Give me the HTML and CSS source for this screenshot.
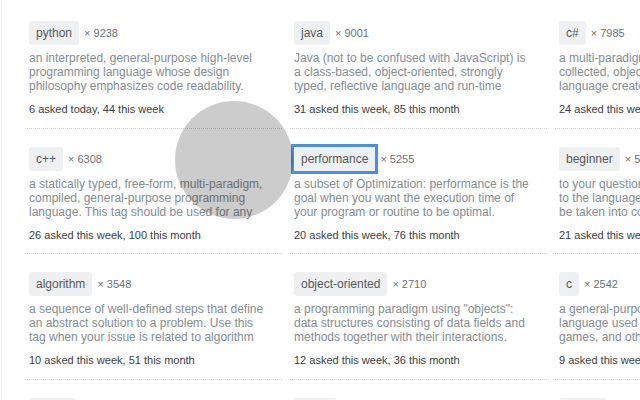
FILE: index.html
```html
<!DOCTYPE html>
<html>
<head>
<meta charset="utf-8">
<link rel="stylesheet" href="styles.css">
</head>
<body>
<div class="page">
  <div class="grid">
    <div class="cell">
      <div class="head"><span class="tag">python</span><span class="count">× 9238</span></div>
      <p class="desc">an interpreted, general-purpose high-level programming language whose design philosophy emphasizes code readability.</p>
      <div class="stats">6 asked today, 44 this week</div>
    </div>
    <div class="cell">
      <div class="head"><span class="tag">java</span><span class="count">× 9001</span></div>
      <p class="desc">Java (not to be confused with JavaScript) is a class-based, object-oriented, strongly typed, reflective language and run-time environment (JRE).</p>
      <div class="stats">31 asked this week, 85 this month</div>
    </div>
    <div class="cell">
      <div class="head"><span class="tag">c#</span><span class="count">× 7985</span></div>
      <p class="desc">a multi-paradigm, strongly typed, garbage- collected, object-oriented programming language created by Microsoft in conjunction with .NET.</p>
      <div class="stats">24 asked this week, 92 this month</div>
    </div>

    <div class="cell">
      <div class="head"><span class="tag">c++</span><span class="count">× 6308</span></div>
      <p class="desc">a statically typed, free-form, multi-paradigm, compiled, general-purpose programming language. This tag should be used for any questions.</p>
      <div class="stats">26 asked this week, 100 this month</div>
    </div>
    <div class="cell">
      <div class="head"><span class="tag focused">performance</span><span class="count">× 5255</span></div>
      <p class="desc">a subset of Optimization: performance is the goal when you want the execution time of your program or routine to be optimal.</p>
      <div class="stats">20 asked this week, 76 this month</div>
    </div>
    <div class="cell">
      <div class="head"><span class="tag">beginner</span><span class="count">× 5132</span></div>
      <p class="desc"><span class="ln">to your question, add details that are specific</span><span class="ln">to the language or library concerned; this will</span><span class="ln">be taken into consideration by answerers.</span></p>
      <div class="stats">21 asked this week, 80 this month</div>
    </div>

    <div class="cell">
      <div class="head"><span class="tag">algorithm</span><span class="count">× 3548</span></div>
      <p class="desc">a sequence of well-defined steps that define an abstract solution to a problem. Use this tag when your issue is related to algorithm design.</p>
      <div class="stats">10 asked this week, 51 this month</div>
    </div>
    <div class="cell">
      <div class="head"><span class="tag">object-oriented</span><span class="count">× 2710</span></div>
      <p class="desc">a programming paradigm using "objects": data structures consisting of data fields and methods together with their interactions.</p>
      <div class="stats">12 asked this week, 36 this month</div>
    </div>
    <div class="cell">
      <div class="head"><span class="tag">c</span><span class="count">× 2542</span></div>
      <p class="desc"><span class="ln">a general-purpose programming</span><span class="ln">language used for system programming,</span><span class="ln">games, and other applications.</span></p>
      <div class="stats">9 asked this week, 40 this month</div>
    </div>

    <div class="cell">
      <div class="head"><span class="tag">arrays</span><span class="count">× 2310</span></div>
      <p class="desc">an ordered linear data structure consisting of a collection of elements.</p>
      <div class="stats">8 asked this week, 30 this month</div>
    </div>
    <div class="cell">
      <div class="head"><span class="tag">string</span><span class="count">× 2204</span></div>
      <p class="desc">a finite sequence of symbols, commonly used for text.</p>
      <div class="stats">7 asked this week, 28 this month</div>
    </div>
    <div class="cell">
      <div class="head"><span class="tag">arrays</span><span class="count">× 2100</span></div>
      <p class="desc">a finite sequence of symbols.</p>
      <div class="stats">6 asked this week, 25 this month</div>
    </div>
  </div>
</div>
<div class="ripple"></div>
</body>
</html>
```

FILE: styles.css
```css
html, body {
  margin: 0;
  padding: 0;
  background: #fff;
  overflow: hidden;
  width: 640px;
  height: 400px;
}

body {
  font-family: "Liberation Sans", Arial, sans-serif;
  position: relative;
}

.page {
  margin-left: 1px;
  border-left: 1px solid #eef0f1;
  height: 400px;
  padding-top: 3px;
  box-sizing: border-box;
}

.grid {
  display: grid;
  grid-template-columns: repeat(3, 257px);
  column-gap: 8px;
  margin-left: 23px;
  width: 787px;
}

.cell {
  padding: 18px 16px 11.5px 4px;
  border-bottom: 1px dotted #cfd2d5;
}

.head {
  display: flex;
  align-items: center;
  height: 24px;
}

.tag {
  display: inline-block;
  height: 24px;
  line-height: 24px;
  padding: 0 7px;
  background: #eff0f1;
  color: #535a60;
  font-size: 12px;
  border-radius: 3px;
}

.tag.focused {
  outline: 3px solid #4a90e2;
  border-radius: 0;
}

.count {
  margin-left: 5px;
  font-size: 11px;
  color: #6a737c;
}

.desc {
  margin: 6px 0 0;
  font-size: 12px;
  line-height: 14px;
  height: 42px;
  overflow: hidden;
  color: #848d95;
}

.ln {
  display: block;
  white-space: nowrap;
}

.stats {
  margin-top: 9px;
  font-size: 11px;
  line-height: 14px;
  color: #3b4045;
  white-space: nowrap;
}

.ripple {
  position: absolute;
  left: 175px;
  top: 101px;
  width: 118px;
  height: 118px;
  border-radius: 50%;
  background: rgba(0, 0, 0, 0.2);
  pointer-events: none;
}
```
